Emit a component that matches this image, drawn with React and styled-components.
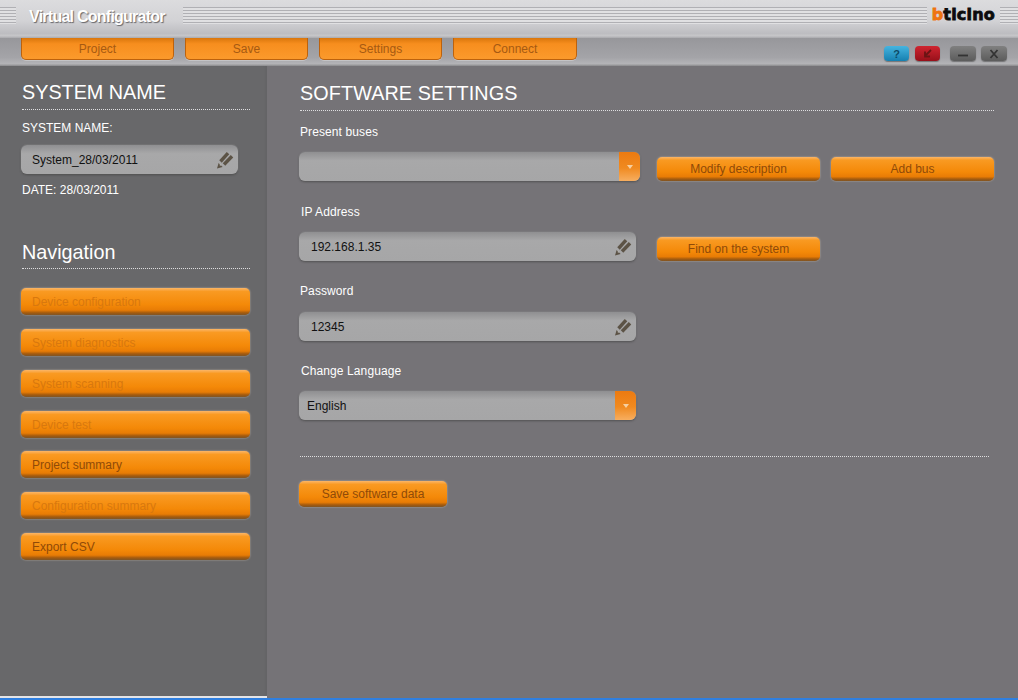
import React from "react";
import styled, {createGlobalStyle} from "styled-components";

const GlobalStyle = createGlobalStyle`
  html, body {
    margin: 0;
    padding: 0;
    background: #757377;
    font-family: "Liberation Sans", Arial, sans-serif;
    overflow: hidden;
  }
`

const Page = styled.div`
  display: flex;
  flex-direction: column;
  width: 1018px;
  height: 700px;
  overflow: hidden;
`

const TitleBar = styled.header`
  display: flex;
  align-items: center;
  flex: 0 0 38px;
  box-sizing: border-box;
  padding-bottom: 8px;
  background: linear-gradient(to bottom, #dcdcde 0%, #d2d2d5 55%, #bdbdc1 88%, #c6c6c9 94%, #a9a9ad 100%);
`

const Stripes = styled.div`
  flex: ${props => props.$grow ? "1" : `0 0 ${props.$width}px`};
  height: 17px;
  background: repeating-linear-gradient(to bottom, #b0b0b4 0, #b0b0b4 1px, #e0e0e2 1px, #e0e0e2 3px);
`

const Title = styled.h1`
  margin: 3px 18px 0 13px;
  color: #fff;
  font-size: 16px;
  font-weight: bold;
  letter-spacing: -0.75px;
  text-shadow: 1px 1px 1px #66666a;
  white-space: nowrap;
`

const Logo = styled.div`
  margin: 0 5px;
  color: #0c0c0c;
  font-family: "DejaVu Sans", sans-serif;
  font-size: 16px;
  font-weight: bold;
  letter-spacing: 0.2px;
  line-height: 16px;
  -webkit-text-stroke: 0.8px #0c0c0c;
  span {
    color: #ee7410;
    -webkit-text-stroke-color: #ee7410;
  }
`

const MenuBar = styled.nav`
  display: flex;
  flex: 0 0 28px;
  box-sizing: border-box;
  padding-left: 21px;
  gap: 11px;
  background: linear-gradient(to bottom, #97979b 0%, #a4a4a8 70%, #b4b4b7 92%, #8a8a8c 100%);
`

const MenuButton = styled.button`
  width: ${props => props.$width}px;
  height: 22px;
  padding: 0;
  border: 1px solid #bd620c;
  border-top: 0;
  border-radius: 0 0 5px 5px;
  background: linear-gradient(to bottom, #d9760c 0%, #f78e1e 28%, #fb9a2c 100%);
  box-shadow: 0 1px 0 #c4c4c6;
  color: #a65a12;
  font: 12px "Liberation Sans", Arial, sans-serif;
`

const WindowButtons = styled.div`
  display: flex;
  gap: 5px;
  margin: 8px 11px 0 auto;
`

const WindowButton = styled.div`
  display: flex;
  align-items: center;
  justify-content: center;
  width: ${props => props.$width || 26}px;
  height: 15px;
  margin-left: ${props => props.$gap || 0}px;
  border-radius: 4px;
  background: ${props => props.$bg};
  box-shadow: 0 1px 1px rgba(60, 60, 60, 0.5);
  color: ${props => props.$fg};
  font-size: 11px;
  font-weight: bold;
`

const WindowIcon = styled.svg`
  width: 12px;
  height: 10px;
`

const Body = styled.div`
  display: flex;
  flex: 1;
  min-height: 0;
`

const Sidebar = styled.aside`
  display: flex;
  flex-direction: column;
  flex: 0 0 267px;
  box-sizing: border-box;
  padding: 14px 17px 0 21px;
  background: #68686a;
  border-bottom: 2px solid #e4e4e6;
  box-shadow: inset -2px 0 2px rgba(0, 0, 0, 0.04);
`

const Main = styled.main`
  flex: 1;
  box-sizing: border-box;
  padding: 15px 24px 0 32px;
  background: #757377;
`

const Heading = styled.h2`
  margin: ${props => props.$margin || "0 0 0 1px"};
  color: #fff;
  font-size: 19.8px;
  font-weight: normal;
  letter-spacing: ${props => props.$spacing || 0}px;
  line-height: 24px;
`

const Dotted = styled.div`
  height: 0;
  margin: ${props => props.$margin || "5px 0 0 1px"};
  border-top: 1px dotted #dedee0;
`

const SmallText = styled.div`
  margin: ${props => props.$margin};
  color: #fff;
  font-size: 12px;
  line-height: 14px;
`

const Label = styled(SmallText)`
  letter-spacing: 0.1px;
`

const Field = styled.div`
  position: relative;
  display: flex;
  align-items: center;
  box-sizing: border-box;
  width: ${props => props.$width}px;
  height: 29px;
  margin: ${props => props.$margin || 0};
  padding-left: ${props => props.$pad || 12}px;
  border-radius: 6px;
  overflow: hidden;
  background: linear-gradient(to bottom, #8f8f91 0%, #a8a8a9 30%, #a6a6a7 100%);
  box-shadow: 0 1px 2px rgba(50, 50, 50, 0.6), 0 0 0 1px rgba(150, 150, 150, 0.25);
  color: #111;
  font-size: 12px;
  flex: none;
`

const Arrow = styled.div`
  position: absolute;
  top: 0;
  right: 0;
  bottom: 0;
  display: flex;
  align-items: center;
  justify-content: center;
  width: 21px;
  background: linear-gradient(to bottom, #ec7a10 0%, #f08a20 55%, #f7ae60 100%);
  &::after {
    content: "";
    border: 3px solid transparent;
    border-top: 4px solid #f6cfa0;
    margin-top: 4px;
  }
`

const Pencil = styled.svg`
  position: absolute;
  right: 3px;
  top: 5px;
  width: 20px;
  height: 20px;
`

const NavList = styled.div`
  display: flex;
  flex-direction: column;
  gap: 14px;
  margin-top: 19px;
`

const OrangeButton = styled.button`
  display: block;
  box-sizing: border-box;
  width: ${props => props.$width ? `${props.$width}px` : "100%"};
  height: ${props => props.$height || 24}px;
  margin: ${props => props.$margin || 0};
  padding: ${props => props.$left ? "0 0 0 11px" : "0"};
  border: 0;
  border-radius: 5px;
  background: linear-gradient(to bottom, #fbb668 0%, #f99a22 13%, #f48908 62%, #e87c05 82%, #a35a0e 92%, #7f5526 100%);
  box-shadow: 0 0 2px rgba(235, 215, 195, 0.65);
  color: ${props => props.$off ? "#d8780e" : "#8f4a08"};
  font: 12px "Liberation Sans", Arial, sans-serif;
  text-align: ${props => props.$left ? "left" : "center"};
  flex: none;
`

const Row = styled.div`
  display: flex;
  align-items: flex-end;
  gap: 11px;
  margin: ${props => props.$margin};
`

const BottomStrip = styled.div`
  flex: 0 0 2px;
  background: #2f7fe0;
`

const navItems = [
    {label: "Device configuration", off: true},
    {label: "System diagnostics", off: true},
    {label: "System scanning", off: true},
    {label: "Device test", off: true},
    {label: "Project summary", margin: "-1px 0 0"},
    {label: "Configuration summary", off: true},
    {label: "Export CSV"},
];

const PencilIcon = () => (
    <Pencil viewBox="0 0 20 20">
        <path d="M2 18.5l1.6-5.6 4 4z" fill="#5c5346"/>
        <path d="M4.6 13.1l1.9 1.9-1.6 .9z" fill="#b5b3ad"/>
        <path d="M5.5 11.5L13 3.2" stroke="#5c5346" strokeWidth="3.4" fill="none"/>
        <path d="M9 14.5L17 6.2" stroke="#5c5346" strokeWidth="3.4" fill="none"/>
    </Pencil>
);

const App = () => {
    return (
        <Page>
            <GlobalStyle/>
            <TitleBar>
                <Stripes $width={16}/>
                <Title>Virtual Configurator</Title>
                <Stripes $grow/>
                <Logo><span>b</span>ticino</Logo>
                <Stripes $width={18}/>
            </TitleBar>
            <MenuBar>
                <MenuButton $width={153}>Project</MenuButton>
                <MenuButton $width={123}>Save</MenuButton>
                <MenuButton $width={123}>Settings</MenuButton>
                <MenuButton $width={124}>Connect</MenuButton>
                <WindowButtons>
                    <WindowButton $width={25} $bg="linear-gradient(#45b4e0, #1680b0)" $fg="#0d4a66">?</WindowButton>
                    <WindowButton $width={25} $gap={1} $bg="linear-gradient(#cf2530, #97101a)">
                        <WindowIcon viewBox="0 0 12 10">
                            <path d="M9 1L4 6M3 2.5V7.5H8" stroke="#6a1414" strokeWidth="1.8" fill="none"/>
                        </WindowIcon>
                    </WindowButton>
                    <WindowButton $gap={5} $bg="linear-gradient(#808080, #5c5c5c)">
                        <WindowIcon viewBox="0 0 12 10">
                            <path d="M1 6.5H11" stroke="#333" strokeWidth="1.8" fill="none"/>
                        </WindowIcon>
                    </WindowButton>
                    <WindowButton $bg="linear-gradient(#808080, #5c5c5c)">
                        <WindowIcon viewBox="0 0 12 10">
                            <path d="M2.5 1L9.5 9M9.5 1L2.5 9" stroke="#333" strokeWidth="1.8" fill="none"/>
                        </WindowIcon>
                    </WindowButton>
                </WindowButtons>
            </MenuBar>
            <Body>
                <Sidebar>
                    <Heading>SYSTEM NAME</Heading>
                    <Dotted/>
                    <SmallText $margin="11px 0 0 1px">SYSTEM NAME:</SmallText>
                    <Field $width={217} $pad={11} $margin="10px 0 0">
                        System_28/03/2011
                        <PencilIcon/>
                    </Field>
                    <SmallText $margin="9px 0 0 1px">DATE: 28/03/2011</SmallText>
                    <Heading $margin="43px 0 0 1px">Navigation</Heading>
                    <Dotted $margin="4px 0 0 1px"/>
                    <NavList>
                        {navItems.map(item => (
                            <OrangeButton key={item.label} $left $height={27} $off={item.off} $margin={item.margin}>{item.label}</OrangeButton>
                        ))}
                    </NavList>
                </Sidebar>
                <Main>
                    <Heading $spacing={0.1}>SOFTWARE SETTINGS</Heading>
                    <Dotted/>
                    <Label $margin="14px 0 0 1px">Present buses</Label>
                    <Row $margin="13px 0 0">
                        <Field $width={341}><Arrow/></Field>
                        <OrangeButton $width={163} $margin="0 0 0 6px">Modify description</OrangeButton>
                        <OrangeButton $width={163}>Add bus</OrangeButton>
                    </Row>
                    <Label $margin="24px 0 0 2px">IP Address</Label>
                    <Row $margin="13px 0 0">
                        <Field $width={337}>192.168.1.35<PencilIcon/></Field>
                        <OrangeButton $width={163} $margin="0 0 0 10px">Find on the system</OrangeButton>
                    </Row>
                    <Label $margin="23px 0 0 1px">Password</Label>
                    <Field $width={337} $margin="14px 0 0">12345<PencilIcon/></Field>
                    <Label $margin="23px 0 0 2px">Change Language</Label>
                    <Field $width={337} $pad={8} $margin="13px 0 0">English<Arrow/></Field>
                    <Dotted $margin="36px 5px 0 1px"/>
                    <OrangeButton $width={148} $height={26} $margin="24px 0 0">Save software data</OrangeButton>
                </Main>
            </Body>
            <BottomStrip/>
        </Page>
    );
}

export default App;
